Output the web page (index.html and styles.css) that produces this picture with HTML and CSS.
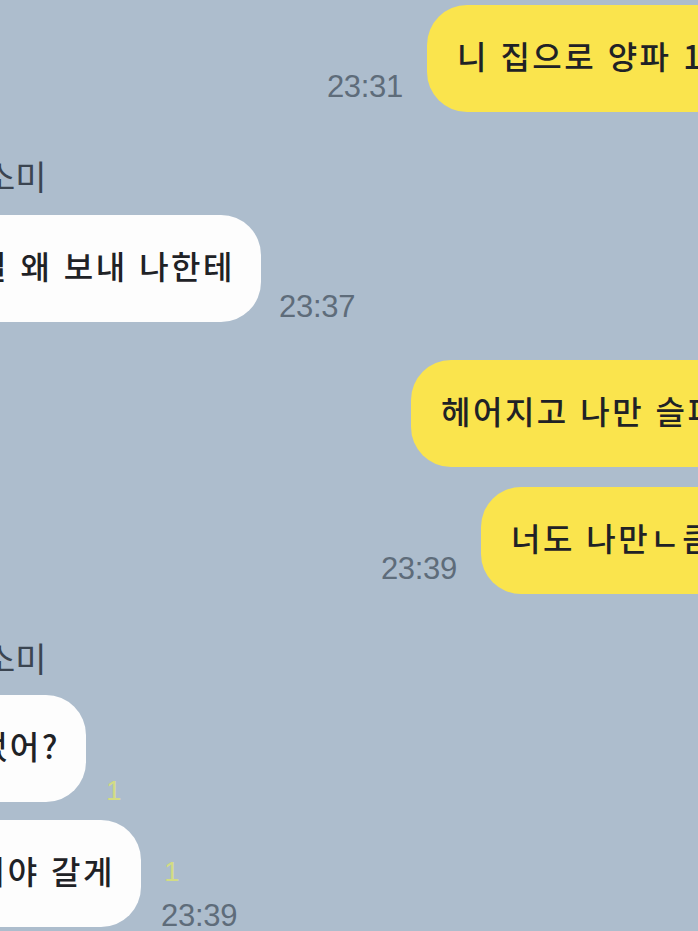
FILE: index.html
```html
<!DOCTYPE html>
<html lang="ko">
<head>
<meta charset="utf-8">
<title>채팅</title>
<link rel="stylesheet" href="styles.css">
</head>
<body>
<main class="chat">
  <div class="row row--mine row--m1">
    <div class="lead lead--427"><span class="time time--raised">23:31</span></div>
    <div class="bubble bubble--mine">니 집으로 양파 1박스</div>
  </div>

  <div class="name name--first">소미</div>

  <div class="row row--theirs row--t1">
    <div class="lead lead--261"><div class="bubble bubble--theirs">그걸 왜 보내 나한테</div></div>
    <div class="side side--18"><span class="time">23:37</span></div>
  </div>

  <div class="row row--mine row--m2">
    <div class="lead lead--411"></div>
    <div class="bubble bubble--mine">헤어지고 나만 슬퍼</div>
  </div>

  <div class="row row--mine row--m3">
    <div class="lead lead--481"><span class="time time--raised">23:39</span></div>
    <div class="bubble bubble--mine">너도 나만ㄴ큼</div>
  </div>

  <div class="name name--second">소미</div>

  <div class="row row--theirs row--t2">
    <div class="lead lead--86"><div class="bubble bubble--theirs">잘 지냈어?</div></div>
    <div class="side side--20"><span class="read">1</span></div>
  </div>

  <div class="row row--theirs row--t3">
    <div class="lead lead--141"><div class="bubble bubble--theirs">이야 갈게</div></div>
    <div class="side side--20 side--stack"><span class="read read--up">1</span><span class="time time--low">23:39</span></div>
  </div>
</main>
</body>
</html>
```

FILE: styles.css
```css
html, body {
  margin: 0;
  padding: 0;
}

body {
  width: 698px;
  height: 931px;
  overflow: hidden;
  background: #adbdcd;
  font-family: "Noto Sans CJK KR", "Noto Sans", sans-serif;
  color: #1f2226;
}

.chat {
  display: flex;
  flex-direction: column;
  padding-top: 5px;
}

.row {
  display: flex;
  align-items: flex-end;
}

.row--t1 { margin-top: 18px; }
.row--m2 { margin-top: 38px; }
.row--m3 { margin-top: 20px; }
.row--t2 { margin-top: 16px; }
.row--t3 { margin-top: 18px; }

.lead {
  flex: 0 0 auto;
  display: flex;
  justify-content: flex-end;
  align-items: flex-end;
}

.lead--427 { width: 427px; }
.lead--411 { width: 411px; }
.lead--481 { width: 481px; }
.lead--261 { width: 261px; }
.lead--86 { width: 86px; }
.lead--141 { width: 141px; }

.bubble {
  flex: 0 0 auto;
  white-space: nowrap;
  font-size: 32px;
  font-weight: 500;
  line-height: 43px;
  padding: 29px 30px 35px;
  border-radius: 40px;
  letter-spacing: 2.5px;
}

.bubble--mine {
  background: #fae44d;
}

.bubble--theirs {
  background: #fdfdfd;
  padding-right: 26px;
}

.time {
  font-family: "Liberation Sans", Arial, sans-serif;
  font-size: 31px;
  line-height: 30px;
  color: #5e6c7a;
  letter-spacing: -0.3px;
  margin-right: 24px;
}

.time--raised { margin-bottom: 10px; }
.time--low { margin-bottom: -4px; }

.side {
  display: flex;
  flex-direction: column;
  align-items: flex-start;
}

.side--18 { padding-left: 18px; }
.side--20 { padding-left: 20px; }

.side .time { margin-right: 0; }

.read {
  font-family: "Liberation Sans", Arial, sans-serif;
  font-size: 28px;
  line-height: 22px;
  color: #d3dc84;
  margin-bottom: 0;
}

.read--up {
  margin-bottom: 18px;
  margin-left: 3px;
}

.name {
  font-size: 34px;
  line-height: 42px;
  color: #3b4551;
  margin-left: -16px;
}

.name--first { margin-top: 43px; }
.name--second { margin-top: 43px; }
```
